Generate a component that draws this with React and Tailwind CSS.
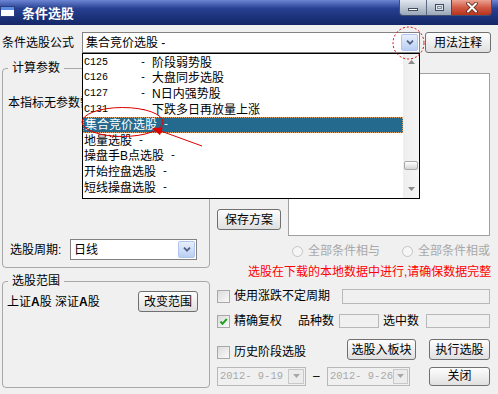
import React from 'react';

const items = [
  { code: 'C125', name: '阶段弱势股' },
  { code: 'C126', name: '大盘同步选股' },
  { code: 'C127', name: 'N日内强势股' },
  { code: 'C131', name: '下跌多日再放量上涨' },
  { name: '集合竞价选股', selected: true },
  { name: '地量选股' },
  { name: '操盘手B点选股' },
  { name: '开始控盘选股' },
  { name: '短线操盘选股' },
];

function Btn({ children, className = '' }) {
  return (
    <button className={`flex items-center justify-center rounded-[3px] border border-[#707070] bg-linear-to-b from-[#fdfdfd] to-[#e0e0e0] text-[12px] leading-[14px] text-black ${className}`}>
      {children}
    </button>
  );
}

function DropBtn() {
  return (
    <div className="mr-[1px] flex h-[17px] w-[17px] items-center justify-center rounded-[2px] border border-[#b1c6ee] bg-linear-to-b from-[#e8effc] to-[#bacef3]">
      <svg width="8" height="5" viewBox="0 0 8 5">
        <path d="M1 0.7 L4 3.7 L7 0.7" stroke="#4d6185" strokeWidth="1.8" fill="none" />
      </svg>
    </div>
  );
}

function Combo({ text, className = '' }) {
  return (
    <div className={`flex items-center border border-[#828282] bg-white ${className}`}>
      <span className="flex-1 overflow-hidden whitespace-pre pl-[3px] leading-[14px]">{text}</span>
      <DropBtn />
    </div>
  );
}

function Check({ checked }) {
  return (
    <div className="flex h-[13px] w-[13px] items-center justify-center border border-[#a8a8a8] bg-linear-to-br from-[#dcdcdc] to-[#fafafa]">
      {checked && (
        <svg width="9" height="9" viewBox="0 0 9 9">
          <path d="M1.5 4.5 L3.5 6.8 L7.8 2" stroke="#21a121" strokeWidth="2" fill="none" />
        </svg>
      )}
    </div>
  );
}

function Radio() {
  return <div className="h-[11px] w-[11px] shrink-0 rounded-full border border-[#c4c4c4] bg-[#f6f6f6]" />;
}

function DateBox({ text, className = '' }) {
  return (
    <div className={`flex h-[19px] items-center border border-[#b8b8b8] ${className}`}>
      <span className="flex-1 whitespace-pre pl-[2px] font-['Liberation_Mono',monospace] text-[10.5px] leading-[12px] text-[#a8a8a8]">{text}</span>
      <div className="mr-[1px] flex h-[15px] w-[16px] items-center justify-center border border-[#c8c8c8] bg-[#ececec]">
        <svg width="7" height="4" viewBox="0 0 7 4">
          <path d="M0 0 L7 0 L3.5 4 Z" fill="#a8a8a8" />
        </svg>
      </div>
    </div>
  );
}

function TitleBar() {
  return (
    <div className="flex h-[25px] items-start bg-linear-to-b from-[#6d86d4] from-0% via-[#263f90] via-35% to-[#132767]">
      {/* window icon */}
      <div className="mt-[6px] h-[11px] w-[15px] border border-[#2b3f80] bg-white">
        <div className="h-[3px] bg-[#5b8de0]" />
      </div>
      <span className="ml-[7px] mt-[6px] text-[13px] font-bold leading-[15px] text-white">条件选股</span>
      <div className="ml-auto mr-[6px] flex h-[16px] overflow-hidden rounded-b-[4px] border border-t-0 border-[#40506e]">
        <div className="flex w-[26px] items-center justify-center bg-linear-to-b from-[#e2e7ef] to-[#9aa6b8] pt-[4px]">
          <div className="h-[3px] w-[10px] border border-[#404b60] bg-white" />
        </div>
        <div className="flex w-[25px] items-center justify-center border-l border-[#5a6880] bg-linear-to-b from-[#e2e7ef] to-[#9aa6b8]">
          <div className="h-[7px] w-[9px] border border-[#404b60] bg-[#dfe4ec]">
            <div className="mx-auto mt-[1px] h-[3px] w-[5px] border border-[#8090a8]" />
          </div>
        </div>
        <div className="flex w-[40px] items-center justify-center border-l border-[#7a3a30] bg-linear-to-b from-[#eba292] via-[#d05a44] to-[#b8321e]">
          <svg width="12" height="11" viewBox="0 0 12 11">
            <path d="M2 1.5 L10 9.5 M10 1.5 L2 9.5" stroke="#5a2418" strokeWidth="3.6" strokeLinecap="round" />
            <path d="M2 1.5 L10 9.5 M10 1.5 L2 9.5" stroke="#ffffff" strokeWidth="2" strokeLinecap="round" />
          </svg>
        </div>
      </div>
    </div>
  );
}

function DropList() {
  return (
    <div className="absolute left-[82px] top-[53px] flex h-[146px] w-[338px] border border-black bg-white">
      <div className="flex-1 pt-[1px]">
        {items.map((it) => (
          <div
            key={it.name}
            className={`flex h-[15.6px] items-center whitespace-nowrap pl-[1px] leading-[14px] ${it.selected ? 'border border-dotted border-[#e0a060] bg-[#236a8e] text-white' : 'text-black'}`}
          >
            {it.code ? (
              <>
                <span className="inline-block w-[56px] font-['Liberation_Mono',monospace] text-[10px]">{it.code}</span>
                <span className="mr-[6px] font-['Liberation_Mono',monospace] text-[10px]">-</span>
                <span>{it.name}</span>
              </>
            ) : (
              <>
                <span>{it.name}</span>
                <span className="ml-[6px] font-['Liberation_Mono',monospace] text-[10px]">-</span>
              </>
            )}
          </div>
        ))}
      </div>
      <div className="flex w-[16px] flex-col items-center bg-linear-to-r from-[#eeeeee] to-[#f6f6f6]">
        <svg className="mt-[6px]" width="7" height="4" viewBox="0 0 7 4">
          <path d="M0 4 L7 4 L3.5 0 Z" fill="#8a8a8a" />
        </svg>
        <div className="mt-[97px] h-[9px] w-[14px] rounded-[2px] border border-[#a8a8a8] bg-linear-to-b from-white to-[#d4d4d4]" />
        <svg className="mt-[17px]" width="7" height="4" viewBox="0 0 7 4">
          <path d="M0 0 L7 0 L3.5 4 Z" fill="#8a8a8a" />
        </svg>
      </div>
    </div>
  );
}

function Annotations() {
  return (
    <svg className="pointer-events-none absolute inset-0" width="498" height="394" viewBox="0 0 498 394">
      <ellipse cx="408.5" cy="43" rx="15.5" ry="16" fill="none" stroke="#e00000" strokeWidth="1" strokeDasharray="2 2" />
      <ellipse cx="122.5" cy="122" rx="40.5" ry="14.5" fill="none" stroke="#e00000" strokeWidth="1" />
      <path d="M202 146 L158 130" stroke="#e00000" strokeWidth="1" />
      <polygon points="152,128 162.8,127.4 160,135.2" fill="#e00000" />
    </svg>
  );
}

export default function App() {
  return (
    <div className="relative h-[394px] w-[498px] overflow-hidden bg-[#f0f0f0] font-['Liberation_Sans','Noto_Sans_CJK_SC',sans-serif] text-[12px] text-black">
      <TitleBar />

      {/* formula row */}
      <div className="mt-[7px] flex h-[21px] items-center pl-[2px]">
        <span className="w-[80px] leading-[14px]">条件选股公式</span>
        <Combo className="h-[21px] w-[338px]" text="集合竞价选股 -" />
        <Btn className="ml-[5px] h-[21px] w-[66px]">用法注释</Btn>
      </div>

      <div className="flex">
        {/* left column */}
        <div className="ml-[2px] mt-[8px] w-[208px]">
          <fieldset className="h-[207px] rounded-[4px] border border-[#a8a8a8]">
            <legend className="ml-[5px] px-[4px] leading-[14px]">计算参数</legend>
            {/* the open list covers most of this line */}
            <div className="mt-[21px] whitespace-nowrap pl-[5px] leading-[14px]">本指标无参数需要设置</div>
            <div className="mt-[129px] flex h-[21px] items-center pl-[7px]">
              <span className="w-[60px] leading-[14px]">选股周期:</span>
              <Combo className="h-[21px] w-[127px]" text="日线" />
            </div>
          </fieldset>
          <fieldset className="mt-[6px] h-[114px] rounded-[4px] border border-[#a8a8a8]">
            <legend className="ml-[5px] px-[4px] leading-[14px]">选股范围</legend>
            <div className="mt-[3px] flex h-[21px] items-center pl-[4px]">
              <span className="leading-[14px]">
                上证<b>A</b>股 深证<b>A</b>股
              </span>
              <Btn className="ml-auto mr-[11px] h-[21px] w-[60px]">改变范围</Btn>
            </div>
          </fieldset>
        </div>

        {/* right column */}
        <div className="ml-[7px] mt-[20px] w-[273px]">
          <div className="flex h-[163px]">
            <div className="flex w-[71px] flex-col justify-end pb-[6px]">
              <Btn className="h-[21px] w-[64px]">保存方案</Btn>
            </div>
            <div className="flex-1 border border-[#a0a0a0] bg-white" />
          </div>

          <div className="mt-[9px] flex h-[12px] items-center whitespace-nowrap pl-[75px] text-[#a8a8a8]">
            <Radio />
            <span className="ml-[5px] shrink-0 leading-[14px]">全部条件相与</span>
            <div className="ml-[22px] shrink-0">
              <Radio />
            </div>
            <span className="ml-[5px] shrink-0 leading-[14px]">全部条件相或</span>
          </div>

          <div className="mt-[8px] whitespace-nowrap pl-[31px] leading-[14px] text-[#ff0000]">
            选股在下载的本地数据中进行,请确保数据完整
          </div>

          <div className="mt-[10px] flex h-[14px] items-center">
            <Check />
            <span className="ml-[4px] leading-[14px]">使用涨跌不定周期</span>
            <div className="ml-auto h-[15px] w-[148px] border border-[#b8b8b8]" />
          </div>

          <div className="mt-[11px] flex h-[14px] items-center">
            <Check checked />
            <span className="ml-[4px] leading-[14px]">精确复权</span>
            <span className="ml-[16px] leading-[14px]">品种数</span>
            <div className="ml-[5px] h-[14px] w-[40px] border border-[#b8b8b8]" />
            <span className="ml-[4px] leading-[14px]">选中数</span>
            <div className="ml-auto h-[14px] w-[64px] border border-[#b8b8b8]" />
          </div>

          <div className="mt-[11px] flex h-[21px] items-start">
            <div className="mt-[6px] flex items-center">
              <Check />
              <span className="ml-[4px] leading-[14px]">历史阶段选股</span>
            </div>
            <Btn className="ml-auto h-[21px] w-[69px]">选股入板块</Btn>
            <Btn className="ml-[13px] h-[21px] w-[61px]">执行选股</Btn>
          </div>

          <div className="mt-[6px] flex h-[20px] items-center">
            <DateBox className="w-[89px]" text="2012- 9-19" />
            <span className="ml-[7px] w-[14px] leading-[14px]">–</span>
            <DateBox className="w-[83px]" text="2012- 9-26" />
            <Btn className="ml-auto h-[19px] w-[61px]">关闭</Btn>
          </div>
        </div>
      </div>

      <DropList />
      <Annotations />
    </div>
  );
}
